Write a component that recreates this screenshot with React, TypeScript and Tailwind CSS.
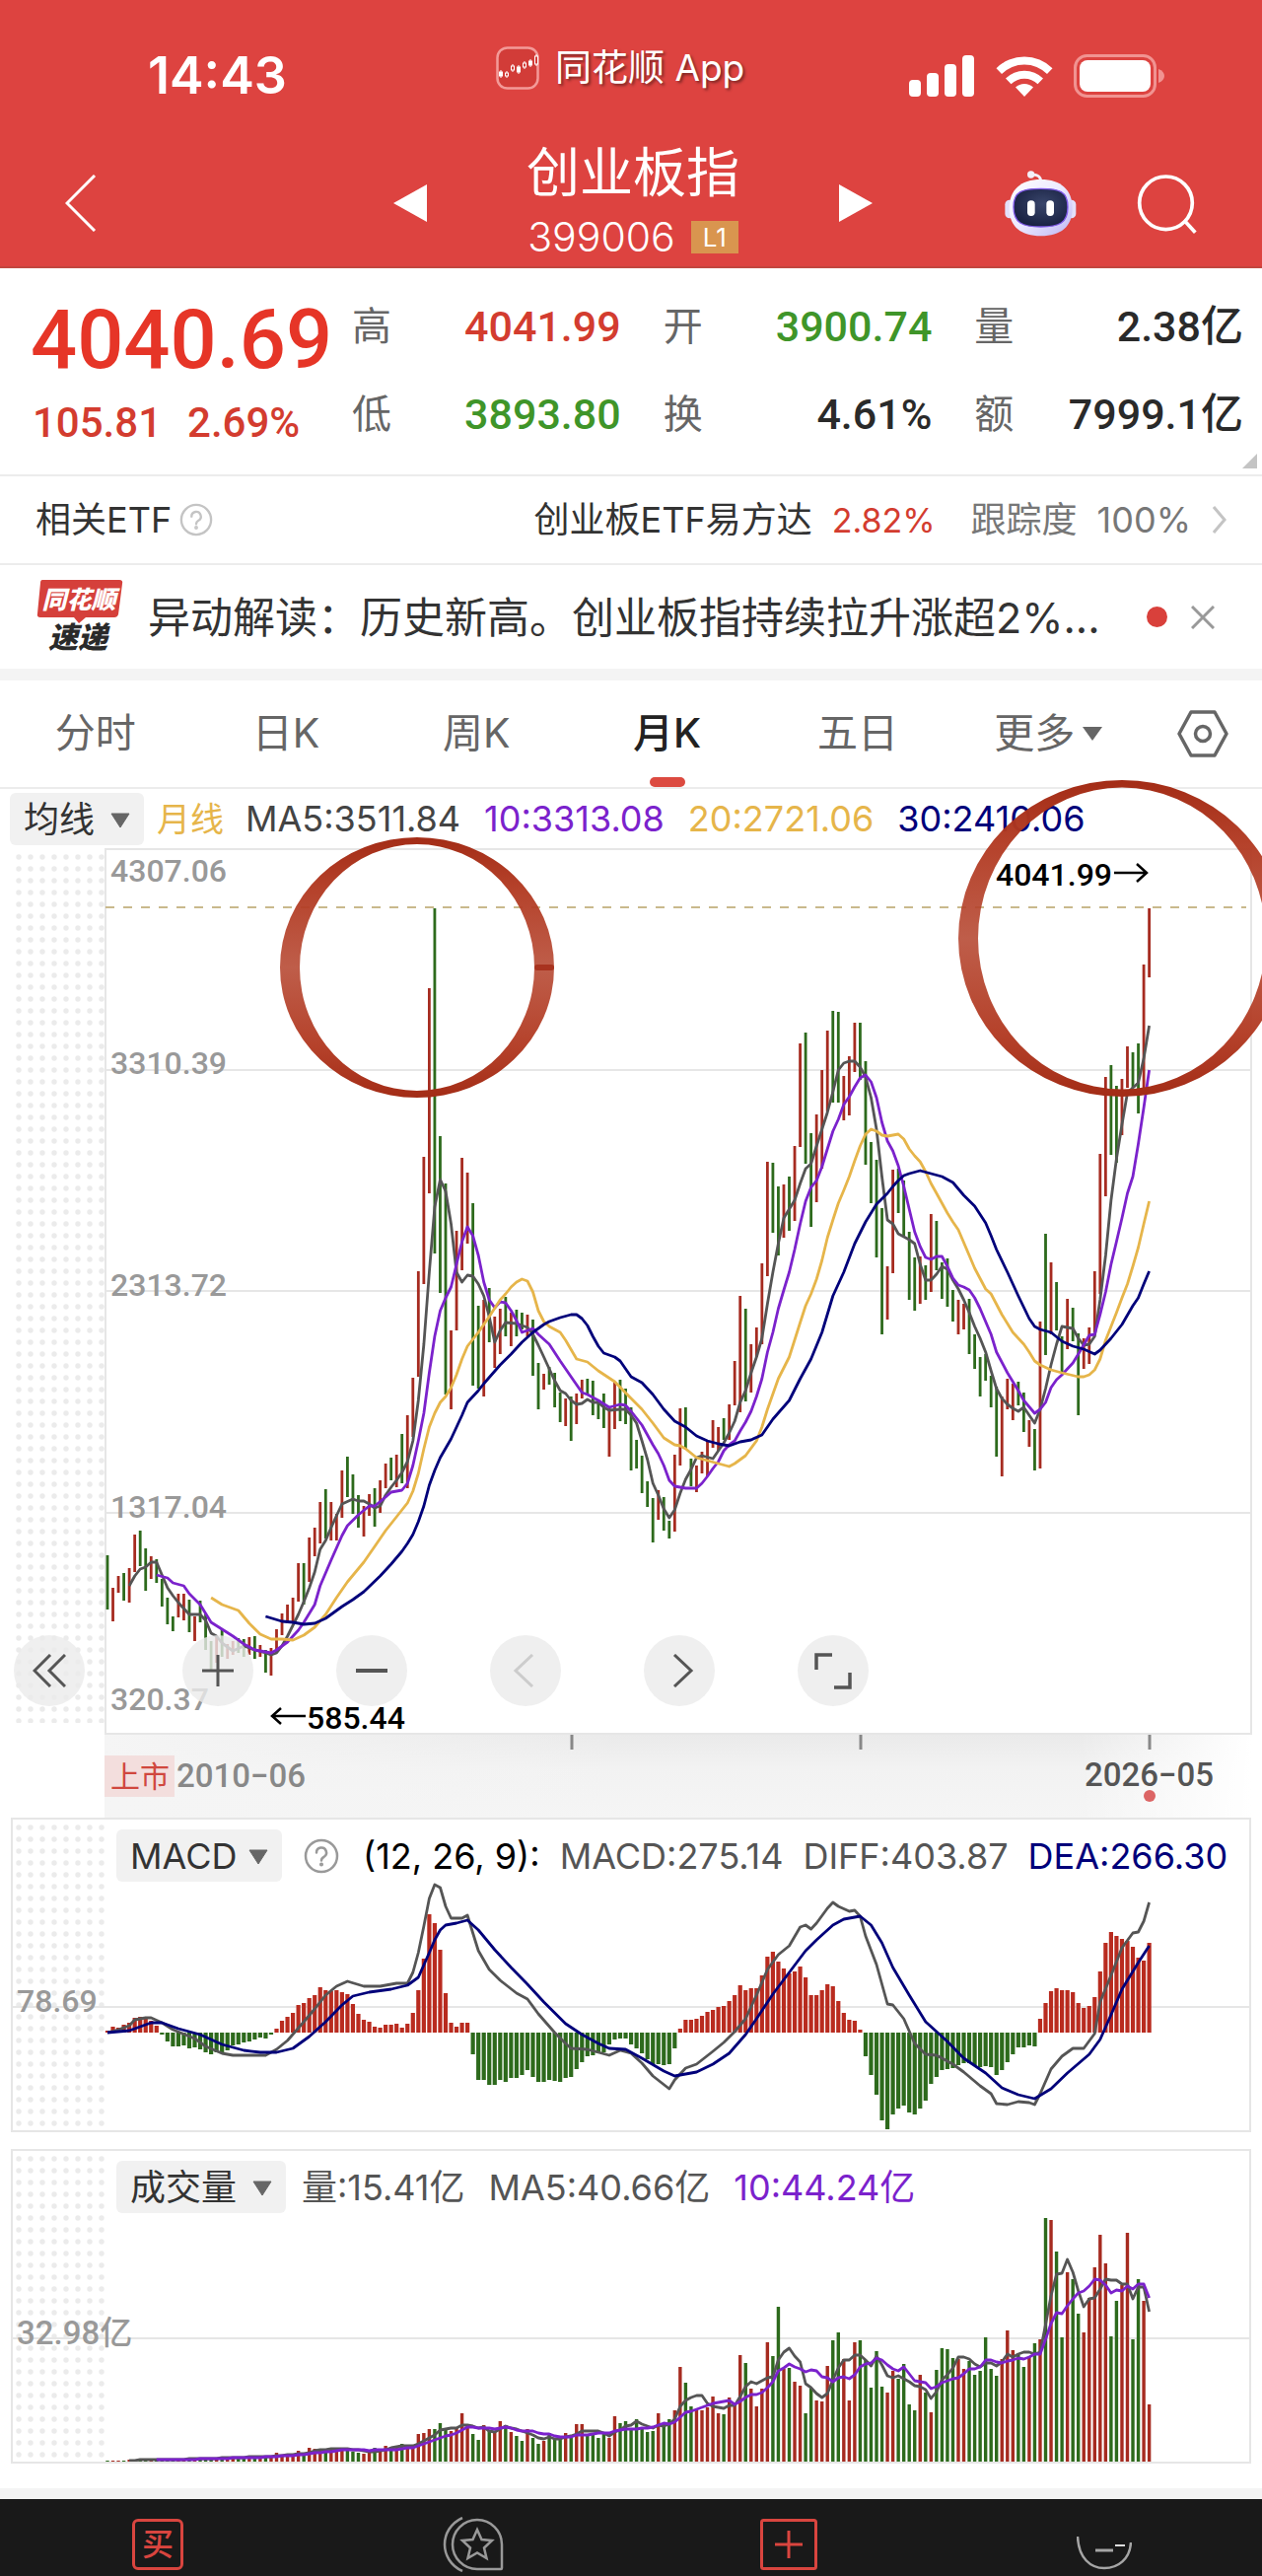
import React, { useState } from 'react';

type Bar = [number, number, number]; // [up, high, low]
type Point = [number, number]; // [month index, y]

const FIRST_X = 109;
const STEP = 5.532;
const RED = '#a62b20';
const GREEN = '#2d6a1c';
const GRAY = '#555555';
const NAVY = '#00007a';
const PURPLE = '#7b22cc';
const AMBER = '#e6b54a';

const xAt = (i: number) => FIRST_X + i * STEP;
const toPoints = (points: Point[]) => points.map(([i, y]) => `${xAt(i).toFixed(1)},${y}`).join(' ');

const candles: Bar[] = [
  [0, 1577, 1632], [1, 1610, 1644], [1, 1598, 1615], [0, 1595, 1623], [1, 1590, 1625], [1, 1556, 1594],
  [0, 1552, 1588], [0, 1570, 1613], [1, 1578, 1601], [0, 1581, 1605], [0, 1601, 1629], [0, 1620, 1647],
  [0, 1639, 1654], [1, 1616, 1640], [1, 1616, 1643], [0, 1622, 1655], [1, 1639, 1664], [0, 1623, 1645],
  [0, 1636, 1673], [0, 1664, 1693], [1, 1658, 1686], [0, 1652, 1680], [1, 1667, 1682], [1, 1664, 1678],
  [0, 1661, 1676], [0, 1662, 1680], [1, 1660, 1678], [0, 1659, 1682], [1, 1668, 1680], [0, 1673, 1696],
  [1, 1671, 1699], [1, 1652, 1676], [1, 1636, 1658], [1, 1627, 1646], [1, 1620, 1646], [1, 1585, 1624],
  [0, 1585, 1627], [1, 1559, 1604], [1, 1549, 1578], [1, 1523, 1565], [0, 1510, 1560], [1, 1523, 1562],
  [1, 1535, 1562], [1, 1491, 1539], [0, 1477, 1518], [0, 1495, 1535], [0, 1516, 1549], [1, 1527, 1558],
  [1, 1515, 1537], [0, 1509, 1548], [1, 1501, 1534], [1, 1484, 1509], [0, 1478, 1501], [1, 1475, 1508],
  [0, 1454, 1504], [1, 1435, 1509], [1, 1397, 1457], [1, 1289, 1396], [1, 1173, 1302], [1, 1002, 1210],
  [0, 921, 1271], [0, 1152, 1311], [0, 1200, 1414], [1, 1349, 1429], [1, 1248, 1349], [1, 1174, 1288],
  [1, 1189, 1261], [0, 1220, 1405], [0, 1324, 1408], [1, 1318, 1416], [0, 1306, 1361], [1, 1335, 1387],
  [1, 1327, 1373], [0, 1315, 1355], [1, 1331, 1365], [0, 1328, 1355], [0, 1331, 1348], [1, 1333, 1355],
  [0, 1338, 1395], [0, 1382, 1429], [1, 1393, 1409], [0, 1386, 1404], [0, 1392, 1427], [0, 1412, 1442],
  [1, 1418, 1446], [0, 1416, 1461], [1, 1413, 1444], [1, 1399, 1418], [0, 1398, 1414], [0, 1400, 1435],
  [0, 1420, 1439], [0, 1413, 1448], [1, 1428, 1477], [1, 1401, 1449], [0, 1399, 1441], [0, 1408, 1444],
  [0, 1427, 1491], [0, 1460, 1489], [0, 1476, 1514], [0, 1502, 1528], [0, 1519, 1564], [1, 1511, 1541],
  [0, 1518, 1552], [0, 1542, 1560], [1, 1475, 1553], [1, 1428, 1486], [0, 1427, 1469], [0, 1479, 1507],
  [1, 1486, 1513], [1, 1472, 1494], [1, 1461, 1497], [1, 1440, 1468], [1, 1447, 1471], [0, 1438, 1460],
  [1, 1424, 1460], [1, 1380, 1425], [1, 1314, 1432], [0, 1327, 1421], [1, 1363, 1412], [1, 1346, 1376],
  [1, 1281, 1363], [1, 1178, 1294], [0, 1179, 1250], [0, 1203, 1273], [1, 1201, 1255], [0, 1193, 1248],
  [1, 1162, 1238], [1, 1058, 1163], [0, 1047, 1180], [0, 1149, 1244], [1, 1130, 1219], [1, 1085, 1185],
  [1, 1045, 1127], [0, 1025, 1118], [0, 1026, 1118], [1, 1091, 1136], [1, 1071, 1131], [1, 1037, 1087],
  [0, 1037, 1095], [0, 1076, 1181], [0, 1158, 1220], [0, 1176, 1275], [0, 1225, 1353], [1, 1284, 1338],
  [1, 1186, 1291], [0, 1185, 1230], [0, 1197, 1253], [0, 1249, 1318], [0, 1275, 1329], [1, 1274, 1322],
  [0, 1283, 1318], [1, 1231, 1310], [0, 1238, 1288], [0, 1280, 1317], [0, 1276, 1325], [0, 1308, 1340],
  [1, 1318, 1353], [1, 1322, 1348], [0, 1317, 1373], [0, 1353, 1388], [0, 1376, 1416], [0, 1373, 1400],
  [0, 1395, 1427], [0, 1406, 1477], [1, 1416, 1497], [1, 1398, 1429], [1, 1403, 1440], [0, 1401, 1425],
  [0, 1412, 1452], [1, 1440, 1467], [0, 1449, 1491], [1, 1340, 1489], [0, 1251, 1374], [1, 1280, 1353],
  [0, 1300, 1349], [0, 1355, 1391], [1, 1317, 1368], [0, 1326, 1360], [0, 1352, 1435], [1, 1357, 1388],
  [1, 1346, 1383], [1, 1289, 1351], [1, 1170, 1312], [1, 1092, 1213], [0, 1080, 1171], [0, 1101, 1179],
  [1, 1094, 1151], [1, 1061, 1103], [0, 1067, 1103], [0, 1058, 1129], [1, 978, 1103], [1, 921, 991],
];

const ma5: Point[] = [
  [4, 1608], [5, 1598], [6, 1591], [7, 1589], [8, 1584], [9, 1584], [10, 1597], [11, 1610], [12, 1618], [13, 1625],
  [14, 1631], [15, 1637], [17, 1637], [18, 1643], [19, 1656], [20, 1659], [21, 1666], [22, 1670], [23, 1674], [25, 1669],
  [27, 1673], [29, 1676], [30, 1678], [31, 1676], [32, 1669], [33, 1659], [34, 1648], [35, 1637], [36, 1624], [37, 1610],
  [38, 1594], [39, 1571], [40, 1562], [41, 1549], [42, 1537], [43, 1525], [45, 1520], [46, 1522], [47, 1522], [48, 1525],
  [49, 1529], [50, 1527], [51, 1516], [52, 1508], [53, 1501], [54, 1493], [55, 1482], [56, 1461], [57, 1420], [58, 1363],
  [59, 1290], [60, 1224], [61, 1196], [62, 1208], [63, 1241], [64, 1290], [65, 1300], [66, 1293], [67, 1294], [68, 1302],
  [69, 1314], [70, 1335], [71, 1361], [72, 1349], [73, 1341], [75, 1342], [77, 1346], [78, 1353], [79, 1364], [80, 1376],
  [81, 1388], [82, 1400], [83, 1410], [84, 1413], [85, 1420], [86, 1424], [87, 1423], [88, 1419], [89, 1422], [90, 1422],
  [91, 1427], [92, 1430], [94, 1429], [95, 1429], [96, 1435], [97, 1443], [98, 1461], [99, 1480], [100, 1504], [101, 1516],
  [102, 1530], [103, 1539], [104, 1531], [105, 1514], [106, 1500], [107, 1490], [108, 1478], [109, 1476], [111, 1479],
  [112, 1471], [113, 1463], [114, 1453], [115, 1441], [116, 1422], [117, 1410], [118, 1392], [119, 1376], [120, 1357],
  [121, 1322], [122, 1290], [123, 1261], [124, 1235], [125, 1226], [126, 1217], [127, 1200], [128, 1185], [129, 1180],
  [130, 1162], [131, 1145], [132, 1128], [133, 1107], [134, 1085], [135, 1078], [136, 1076], [137, 1076], [138, 1082],
  [139, 1092], [140, 1113], [141, 1145], [142, 1193], [143, 1237], [144, 1241], [145, 1251], [146, 1254], [147, 1257],
  [148, 1261], [149, 1282], [150, 1298], [151, 1298], [152, 1292], [153, 1284], [154, 1287], [155, 1298], [156, 1307],
  [157, 1318], [158, 1331], [159, 1345], [160, 1357], [161, 1371], [162, 1390], [163, 1408], [164, 1418], [165, 1424],
  [166, 1428], [167, 1431], [168, 1427], [169, 1435], [170, 1443], [171, 1429], [172, 1408], [173, 1384], [174, 1363],
  [175, 1345], [177, 1347], [178, 1357], [179, 1364], [180, 1363], [181, 1355], [182, 1318], [183, 1273], [184, 1217],
  [185, 1175], [186, 1140], [187, 1108], [188, 1103], [189, 1098], [190, 1073], [191, 1040],
];

const ma10: Point[] = [
  [9, 1597], [11, 1600], [12, 1605], [14, 1608], [15, 1616], [17, 1627], [19, 1645], [21, 1652], [23, 1659], [25, 1667],
  [27, 1673], [30, 1676], [31, 1673], [33, 1665], [35, 1653], [36, 1645], [38, 1627], [39, 1608], [41, 1582], [43, 1557],
  [44, 1547], [46, 1536], [48, 1527], [49, 1527], [51, 1518], [52, 1513], [54, 1511], [55, 1504], [56, 1486], [57, 1461],
  [58, 1433], [59, 1392], [60, 1355], [61, 1329], [62, 1316], [63, 1305], [64, 1282], [65, 1259], [66, 1244], [67, 1253],
  [68, 1273], [69, 1300], [70, 1318], [71, 1326], [72, 1320], [73, 1321], [74, 1329], [75, 1339], [76, 1351], [78, 1347],
  [79, 1353], [81, 1363], [83, 1380], [85, 1396], [87, 1412], [88, 1414], [90, 1420], [92, 1427], [94, 1424], [95, 1425],
  [96, 1431], [98, 1445], [100, 1465], [101, 1474], [102, 1486], [103, 1501], [104, 1507], [106, 1509], [108, 1509],
  [109, 1504], [110, 1497], [111, 1489], [112, 1482], [113, 1471], [114, 1465], [115, 1461], [116, 1451], [117, 1442],
  [118, 1431], [119, 1416], [120, 1398], [121, 1371], [122, 1351], [123, 1327], [124, 1308], [125, 1290], [126, 1267],
  [127, 1241], [128, 1218], [129, 1204], [130, 1197], [131, 1183], [132, 1165], [133, 1147], [134, 1135], [135, 1120],
  [136, 1112], [137, 1102], [138, 1093], [139, 1090], [140, 1097], [141, 1113], [142, 1138], [143, 1157], [144, 1167],
  [145, 1182], [146, 1203], [147, 1226], [148, 1249], [149, 1264], [150, 1275], [151, 1277], [152, 1274], [153, 1274],
  [154, 1284], [155, 1296], [156, 1303], [157, 1305], [158, 1308], [159, 1316], [160, 1327], [162, 1353], [163, 1371],
  [165, 1392], [167, 1410], [168, 1420], [170, 1433], [171, 1429], [172, 1422], [173, 1407], [174, 1399], [175, 1394],
  [177, 1382], [178, 1373], [180, 1354], [181, 1353], [182, 1333], [183, 1310], [184, 1282], [185, 1259], [186, 1235],
  [187, 1210], [188, 1193], [189, 1160], [190, 1123], [191, 1085],
];

const ma20: Point[] = [
  [19, 1620], [21, 1627], [24, 1633], [26, 1646], [28, 1657], [30, 1662], [32, 1662], [34, 1663], [36, 1658], [38, 1650],
  [40, 1637], [42, 1620], [44, 1604], [47, 1584], [49, 1568], [51, 1552], [53, 1538], [55, 1524], [56, 1512], [57, 1494],
  [58, 1469], [59, 1447], [60, 1433], [61, 1422], [62, 1416], [63, 1407], [64, 1394], [65, 1378], [66, 1365], [68, 1351],
  [69, 1343], [70, 1335], [72, 1318], [73, 1312], [74, 1305], [75, 1300], [76, 1297], [77, 1299], [78, 1310], [79, 1329],
  [80, 1340], [81, 1345], [83, 1351], [84, 1359], [86, 1378], [88, 1381], [90, 1390], [93, 1401], [96, 1418], [98, 1429],
  [100, 1443], [102, 1458], [104, 1465], [105, 1466], [106, 1469], [108, 1478], [110, 1481], [112, 1484], [114, 1487],
  [115, 1484], [117, 1476], [119, 1461], [120, 1447], [121, 1429], [123, 1398], [125, 1376], [127, 1341], [128, 1324],
  [129, 1312], [130, 1297], [131, 1278], [132, 1255], [133, 1237], [134, 1220], [135, 1207], [136, 1193], [137, 1177],
  [138, 1162], [139, 1150], [140, 1145], [141, 1147], [142, 1151], [143, 1152], [144, 1151], [145, 1150], [146, 1155],
  [147, 1165], [148, 1172], [149, 1178], [150, 1188], [151, 1200], [152, 1210], [153, 1220], [154, 1230], [155, 1239],
  [156, 1247], [158, 1273], [159, 1286], [161, 1307], [162, 1312], [164, 1333], [166, 1351], [168, 1363], [169, 1371],
  [170, 1380], [171, 1384], [173, 1389], [175, 1392], [178, 1396], [179, 1396], [180, 1394], [181, 1389], [182, 1378],
  [183, 1359], [184, 1345], [185, 1331], [186, 1316], [187, 1302], [188, 1284], [189, 1265], [190, 1241], [191, 1218],
];

const ma30: Point[] = [
  [29, 1639], [32, 1644], [34, 1645], [36, 1647], [38, 1646], [40, 1641], [43, 1629], [45, 1622], [47, 1614], [50, 1598],
  [52, 1586], [54, 1573], [55, 1565], [56, 1556], [57, 1543], [58, 1527], [59, 1506], [60, 1491], [61, 1478], [63, 1459],
  [65, 1435], [66, 1422], [68, 1410], [69, 1403], [72, 1384], [74, 1373], [76, 1361], [78, 1351], [80, 1343], [81, 1340],
  [83, 1336], [85, 1333], [86, 1333], [87, 1337], [88, 1344], [89, 1355], [90, 1365], [91, 1372], [93, 1376], [94, 1380],
  [96, 1396], [98, 1402], [100, 1414], [102, 1429], [104, 1441], [106, 1447], [108, 1456], [110, 1461], [112, 1464],
  [114, 1466], [116, 1462], [118, 1460], [120, 1455], [122, 1439], [125, 1420], [127, 1398], [129, 1378], [131, 1351],
  [133, 1314], [135, 1290], [137, 1261], [139, 1239], [141, 1221], [143, 1210], [144, 1203], [145, 1197], [146, 1192],
  [147, 1190], [149, 1187], [151, 1190], [153, 1193], [155, 1199], [157, 1212], [159, 1223], [161, 1240], [162, 1253],
  [163, 1267], [165, 1290], [167, 1314], [169, 1337], [170, 1345], [171, 1348], [173, 1351], [175, 1360], [177, 1365],
  [179, 1368], [181, 1373], [182, 1369], [184, 1357], [186, 1343], [188, 1324], [189, 1316], [190, 1302], [191, 1289],
];

// histogram heights, positive above the zero line
const macd = [
  2, 6, 5, 8, 10, 15, 16, 14, 12, 7, -2, -9, -14, -14, -13, -16, -15, -17, -20, -22, -20, -20, -18, -13, -12, -10, -9,
  -7, -5, -6, -2, 4, 12, 16, 20, 28, 30, 35, 38, 46, 43, 42, 43, 41, 39, 29, 19, 13, 11, 6, 5, 8, 8, 9, 5, 9, 20, 43,
  75, 120, 111, 84, 40, 10, 6, 10, 10, -22, -48, -48, -53, -53, -48, -50, -46, -46, -43, -38, -45, -50, -50, -48, -49,
  -50, -46, -45, -37, -30, -24, -23, -21, -20, -12, -7, -6, -6, -12, -16, -21, -27, -32, -32, -33, -32, -16, 4, 13, 13,
  14, 17, 21, 23, 26, 27, 32, 38, 48, 43, 45, 45, 58, 77, 82, 72, 65, 60, 62, 67, 56, 38, 38, 43, 49, 47, 32, 20, 13,
  12, 3, -24, -43, -63, -89, -98, -83, -77, -74, -81, -83, -77, -69, -52, -45, -38, -37, -36, -33, -31, -31, -33, -35,
  -34, -35, -43, -38, -30, -22, -15, -15, -13, -14, 14, 30, 42, 45, 43, 43, 41, 30, 25, 27, 36, 62, 91, 102, 98, 95, 93,
  87, 76, 73, 91,
];

const diff: Point[] = [
  [0, 2061], [2, 2058], [4, 2054], [5, 2048], [7, 2046], [8, 2046], [10, 2051], [12, 2058], [16, 2067], [18, 2075],
  [21, 2082], [23, 2084], [29, 2084], [31, 2078], [33, 2069], [36, 2050], [38, 2037], [40, 2023], [42, 2014], [44, 2009],
  [47, 2014], [50, 2014], [53, 2011], [55, 2011], [56, 2000], [57, 1980], [58, 1953], [59, 1925], [60, 1911], [61, 1914],
  [62, 1933], [63, 1945], [65, 1945], [66, 1942], [67, 1960], [68, 1978], [70, 1997], [72, 2008], [75, 2021], [77, 2027],
  [79, 2042], [82, 2061], [84, 2072], [85, 2077], [88, 2078], [92, 2084], [94, 2079], [96, 2082], [98, 2092], [100, 2105],
  [103, 2118], [104, 2109], [106, 2097], [108, 2093], [111, 2080], [113, 2071], [115, 2060], [117, 2047], [119, 2023],
  [121, 1997], [123, 1982], [125, 1973], [127, 1954], [128, 1952], [129, 1956], [130, 1950], [132, 1935], [133, 1929],
  [134, 1933], [136, 1938], [137, 1937], [138, 1943], [139, 1963], [141, 1992], [143, 2032], [144, 2033], [146, 2047],
  [148, 2072], [150, 2083], [152, 2084], [155, 2093], [157, 2101], [160, 2115], [162, 2123], [163, 2133], [165, 2134],
  [167, 2131], [169, 2132], [170, 2134], [171, 2123], [173, 2098], [175, 2085], [177, 2077], [179, 2077], [181, 2062],
  [182, 2030], [184, 2003], [186, 1975], [188, 1960], [189, 1959], [190, 1948], [191, 1929],
];

const dea: Point[] = [
  [0, 2061], [4, 2059], [6, 2055], [8, 2051], [10, 2051], [13, 2057], [17, 2063], [21, 2073], [25, 2079], [28, 2081],
  [31, 2081], [34, 2077], [37, 2065], [40, 2050], [43, 2033], [45, 2024], [48, 2020], [52, 2017], [55, 2013], [57, 2005],
  [59, 1980], [60, 1967], [61, 1957], [62, 1952], [64, 1950], [66, 1947], [68, 1957], [71, 1977], [74, 1995], [77, 2012],
  [80, 2030], [84, 2052], [87, 2063], [90, 2072], [92, 2077], [95, 2078], [98, 2087], [102, 2100], [104, 2105],
  [108, 2101], [111, 2093], [114, 2082], [117, 2063], [119, 2047], [122, 2022], [125, 2000], [128, 1978], [130, 1967],
  [133, 1952], [135, 1946], [138, 1943], [140, 1952], [142, 1970], [144, 1995], [147, 2023], [150, 2050], [154, 2070],
  [157, 2087], [161, 2102], [164, 2117], [167, 2124], [170, 2128], [173, 2118], [176, 2102], [180, 2083], [182, 2068],
  [184, 2043], [186, 2017], [189, 1990], [191, 1973],
];

const volumes = [
  1, 1, 1, 1, 2, 2, 2, 2, 2, 2, 2, 2, 2, 3, 3, 3, 3, 4, 3, 3, 4, 4, 4, 4, 5, 5, 5, 5, 5, 6, 6, 9, 6, 6, 7, 11, 9, 14,
  13, 12, 13, 12, 13, 14, 13, 10, 9, 8, 10, 14, 13, 16, 15, 16, 18, 16, 14, 28, 29, 33, 33, 39, 32, 31, 34, 49, 37, 28,
  22, 37, 32, 31, 41, 37, 30, 26, 21, 33, 24, 18, 21, 29, 24, 24, 29, 26, 38, 38, 26, 29, 24, 28, 24, 46, 39, 41, 34,
  43, 34, 30, 31, 49, 38, 43, 52, 96, 80, 56, 52, 52, 55, 66, 49, 48, 65, 59, 108, 100, 74, 56, 74, 121, 107, 157, 94,
  95, 81, 77, 49, 74, 62, 61, 97, 123, 131, 104, 62, 121, 123, 103, 75, 112, 76, 70, 92, 84, 99, 58, 52, 88, 70, 50, 93,
  115, 114, 105, 104, 94, 102, 88, 92, 126, 94, 87, 104, 133, 113, 108, 96, 106, 120, 124, 247, 245, 213, 126, 192, 185,
  150, 131, 166, 197, 230, 201, 127, 163, 179, 232, 124, 185, 163, 58,
];

const VOLUME_BASE = 2496;
const MACD_ZERO = 2061;

function average(values: number[], span: number): Point[] {
  const out: Point[] = [];
  for (let i = span - 1; i < values.length; i++) {
    const sum = values.slice(i - span + 1, i + 1).reduce((a, b) => a + b, 0);
    out.push([i, VOLUME_BASE - Math.round(sum / span)]);
  }
  return out;
}

const Line: React.FC<{ points: Point[]; color: string }> = ({ points, color }) => (
  <polyline points={toPoints(points)} fill="none" stroke={color} strokeWidth="2.8" strokeLinejoin="round" />
);

const DotGrid: React.FC<{ id: string; y: number; height: number }> = ({ id, y, height }) => (
  <>
    <defs>
      <pattern id={id} x="13" y={y} width="12" height="12" patternUnits="userSpaceOnUse">
        <circle cx="6" cy="6" r="2.7" fill="#ebebeb" />
      </pattern>
    </defs>
    <rect x="14" y={y} width="93" height={height} fill={`url(#${id})`} />
  </>
);

const HelpIcon: React.FC<{ className: string }> = ({ className }) => (
  <svg viewBox="0 0 36 36" className={className} fill="none" stroke="currentColor" strokeWidth="2.5">
    <circle cx="18" cy="18" r="16" />
    <path d="M13 14.5a5 5 0 1 1 7.5 4.3c-1.8 1-2.5 1.8-2.5 3.7" strokeLinecap="round" />
    <circle cx="18" cy="26.5" r="0.8" fill="currentColor" />
  </svg>
);

interface PickerProps {
  label: string;
  options: string[];
  className: string;
}

const Picker: React.FC<PickerProps> = ({ label, options, className }) => (
  <label className={`relative block h-[53px] shrink-0 rounded-md bg-[#f1f1f1] text-[#333] ${className}`}>
    <select aria-label={label} className="h-full w-full appearance-none bg-transparent pl-[14px] text-[36px] leading-[53px] outline-none">
      {options.map(option => (
        <option key={option}>{option}</option>
      ))}
    </select>
    <svg viewBox="0 0 20 16" className="pointer-events-none absolute right-[14px] top-5 h-4 w-5">
      <path d="M1 1h18L10 15z" fill="#666" stroke="#666" strokeLinejoin="round" />
    </svg>
  </label>
);

const StatusBar = () => (
  <div className="grid grid-cols-[353px_1fr_260px] items-center pl-[150px] pr-[98px] pt-[40px]">
    <span className="pt-2 text-[52px] font-semibold leading-[58px]">14:43</span>
    <div className="flex items-center gap-[16px] pb-[8px]">
      <svg viewBox="0 0 44 44" className="h-[44px] w-[44px]">
        <rect x="1.5" y="1.5" width="41" height="41" rx="10" fill="#d23c38" stroke="#f39a98" strokeWidth="2.5" />
        <g stroke="#fff" strokeWidth="1">
          <path d="M5 24v8M11 25v7M17 18v8M23 19v9M29 15v8M35 13v8M41 8v12" />
          <g fill="#fff">
            <rect x="3.500" y="26" width="3" height="4" />
            <rect x="21.500" y="21" width="3" height="5" />
            <rect x="33.500" y="15" width="3" height="4" />
          </g>
          <g fill="#d23c38">
            <rect x="9.500" y="27" width="3" height="3" />
            <rect x="15.500" y="20" width="3" height="4" />
            <rect x="27.500" y="17" width="3" height="4" />
            <rect x="39.500" y="10" width="3" height="8" />
          </g>
        </g>
      </svg>
      <span className="text-[37px] leading-[44px] [text-shadow:2px_2px_3px_rgba(0,0,0,0.45)]">同花顺 App</span>
    </div>
    <div className="flex items-center justify-between pt-2">
      <svg viewBox="0 0 66 42" className="h-[42px] w-[66px]" fill="#fff">
        <rect x="0" y="25" width="12" height="17" rx="4" />
        <rect x="18" y="18" width="12" height="24" rx="4" />
        <rect x="36" y="9" width="12" height="33" rx="4" />
        <rect x="54" y="0" width="12" height="42" rx="4" />
      </svg>
      <svg viewBox="0 0 58 42" className="h-[42px] w-[58px]" fill="#fff">
        <path d="M29 42l9-9.500a13 13 0 0 0-18 0z" />
        <path d="M10 23.500a27 27 0 0 1 38 0l-5.500 5.800a19 19 0 0 0-27 0z" />
        <path d="M0.500 13.200a40.500 40.500 0 0 1 57 0l-5.500 5.800a32.500 32.500 0 0 0-46 0z" />
      </svg>
      <svg viewBox="0 0 93 44" className="h-[44px] w-[93px]">
        <rect x="1.500" y="1.500" width="81" height="41" rx="12" fill="none" stroke="#f19391" strokeWidth="3" />
        <rect x="6" y="6" width="72" height="32" rx="8" fill="#fff" />
        <path d="M86 15c8 3 8 11 0 14z" fill="#f19391" />
      </svg>
    </div>
  </div>
);

const RobotIcon = () => (
  <svg viewBox="55 55 225 210" className="h-[70px] w-[75px]">
    <defs>
      <linearGradient id="shell" x1="0" y1="0" x2="1" y2="1">
        <stop offset="0" stopColor="#fff" />
        <stop offset="0.5" stopColor="#ece9ff" />
        <stop offset="1" stopColor="#bcb4f4" />
      </linearGradient>
      <radialGradient id="visor" cx="0.55" cy="0.4" r="0.7">
        <stop offset="0" stopColor="#39456b" />
        <stop offset="1" stopColor="#141c3c" />
      </radialGradient>
    </defs>
    <path d="M168 95c0-16-8-22-30-22" fill="none" stroke="#f3eff8" strokeWidth="9" strokeLinecap="round" />
    <circle cx="138" cy="73" r="11" fill="#f3eff8" />
    <rect x="59" y="150" width="30" height="56" rx="14" fill="#e3dffa" />
    <rect x="245" y="150" width="30" height="56" rx="14" fill="#e3dffa" />
    <path d="M168 88c62 0 96 32 96 88s-36 84-96 84-96-28-96-84 34-88 96-88z" fill="url(#shell)" />
    <path d="M168 116c56 0 82 8 82 56s-26 60-82 60-83-12-83-60 27-56 83-56z" fill="url(#visor)" stroke="#7f58e8" strokeWidth="4" />
    <rect x="127" y="152" width="23" height="47" rx="11" fill="#fff" />
    <rect x="185" y="152" width="23" height="47" rx="11" fill="#fff" />
  </svg>
);

const Header = () => (
  <header className="border-b-2 border-[#c2463f] bg-[#dd4340] text-white">
    <StatusBar />
    <div className="mt-[36px] grid grid-cols-[1fr_auto_1fr] items-center pl-[4px]">
      <button type="button" aria-label="返回" className="justify-self-start pl-[62px]">
        <svg viewBox="0 0 32 58" className="h-[58px] w-[32px]" fill="none" stroke="#fff" strokeWidth="3">
          <path d="M30 1L2 29l28 28" />
        </svg>
      </button>
      <div className="flex w-[486px] items-center justify-between">
        <button type="button" aria-label="上一个">
          <svg viewBox="0 0 34 38" className="h-[38px] w-[34px]" fill="#fff"><path d="M34 0v38L0 19z" /></svg>
        </button>
        <div className="flex flex-col items-center">
          <h1 className="text-[54px] font-normal leading-[68px]">创业板指</h1>
          <div className="flex items-center gap-[16px]">
            <span className="text-[41px] font-light leading-[60px]">399006</span>
            <span className="w-[48px] bg-[#d9954f] text-center text-[26px] leading-[33px]">L1</span>
          </div>
        </div>
        <button type="button" aria-label="下一个">
          <svg viewBox="0 0 34 38" className="h-[38px] w-[34px]" fill="#fff"><path d="M0 0v38l34-19z" /></svg>
        </button>
      </div>
      <div className="flex items-center gap-[60px] justify-self-end pr-[66px]">
        <button type="button" aria-label="智能助手"><RobotIcon /></button>
        <button type="button" aria-label="搜索">
          <svg viewBox="460 72 182 182" className="h-[61px] w-[61px]" fill="none" stroke="#fff" strokeWidth="11">
            <circle cx="548" cy="161" r="80" />
            <path d="M603 213l34 37" />
          </svg>
        </button>
      </div>
    </div>
  </header>
);

const quotes = [
  { label: '高', value: '4041.99', tone: 'text-[#d33c2f]' },
  { label: '开', value: '3900.74', tone: 'text-[#3f9529]' },
  { label: '量', value: '2.38亿', tone: 'text-[#2a2a2a]' },
  { label: '低', value: '3893.80', tone: 'text-[#3f9529]' },
  { label: '换', value: '4.61%', tone: 'text-[#2a2a2a]' },
  { label: '额', value: '7999.1亿', tone: 'text-[#2a2a2a]' },
];

const QuotePanel = () => (
  <section className="relative flex border-b-2 border-[#ececec] pb-[17px] pl-[31px] pr-[19px] pt-[14px]">
    <div className="w-[326px] pt-[14px] font-[Roboto,'Noto_Sans_CJK_SC',sans-serif]">
      <div className="text-[83px] font-medium leading-[90px] text-[#e63527]">4040.69</div>
      <div className="flex gap-[26px] pl-[2px] pt-[10px] text-[42px] font-medium leading-[58px] text-[#d33c2f]">
        <span>105.81</span>
        <span>2.69%</span>
      </div>
    </div>
    <dl className="grid flex-1 grid-cols-3 gap-x-[43px]">
      {quotes.map(({ label, value, tone }) => (
        <div key={label} className="flex h-[89px] items-center justify-between">
          <dt className="text-[40px] leading-[60px] text-[#666]">{label}</dt>
          <dd className={`whitespace-nowrap font-[Roboto,'Noto_Sans_CJK_SC',sans-serif] text-[43px] font-medium leading-[60px] ${tone}`}>{value}</dd>
        </div>
      ))}
    </dl>
    <svg viewBox="0 0 15 15" className="absolute bottom-[6px] right-[5px] h-[15px] w-[15px]"><path d="M15 0v15H0z" fill="#c4c4c4" /></svg>
  </section>
);

const EtfRow = () => (
  <section className="flex h-[90px] items-center justify-between border-b-2 border-[#ececec] pl-[36px] pr-[36px] text-[36px] text-[#333]">
    <div className="flex items-center gap-[8px]">
      相关ETF
      <HelpIcon className="h-[34px] w-[34px] text-[#c4c4c4]" />
    </div>
    <a href="#etf" className="flex items-center">
      <span>创业板ETF易方达</span>
      <span className="pl-[20px] text-[34px] text-[#d33c2f]">2.82%</span>
      <span className="pl-[36px] text-[#777]">跟踪度</span>
      <span className="pl-[20px] text-[#777]">100%</span>
      <svg viewBox="0 0 14 28" className="ml-[22px] h-[28px] w-[14px]" fill="none" stroke="#c4c4c4" strokeWidth="3"><path d="M1 1l11 13L1 27" /></svg>
    </a>
  </section>
);

const NewsRow = () => (
  <section className="flex h-[105px] items-center pl-[36px] pr-[48px]">
    <svg viewBox="0 0 90 78" className="h-[78px] w-[90px] shrink-0 font-['Noto_Sans_CJK_SC',sans-serif] font-black italic" textAnchor="middle">
      <path d="M7 1h78q4 0 3 4l-4 31q-1 3-4 3H51l-7 6-5-6H5q-4 0-3-4l3-31q0-3 2-3z" fill="#d5403b" />
      <text x="44" y="30" fontSize="25" fill="#fff">同花顺</text>
      <text x="43" y="70" fontSize="30" fill="#2a2a2a">速递</text>
    </svg>
    <a href="#news" className="ml-[24px] min-w-0 flex-1 whitespace-nowrap text-[43px] leading-[60px] text-[#333]">异动解读：历史新高。创业板指持续拉升涨超2%...</a>
    <span className="h-[21px] w-[21px] shrink-0 rounded-full bg-[#d9403b]" />
    <button type="button" aria-label="关闭" className="ml-[24px]">
      <svg viewBox="0 0 24 24" className="h-[24px] w-[24px]" stroke="#999" strokeWidth="3"><path d="M1 1l22 22M23 1L1 23" /></svg>
    </button>
  </section>
);

const periods = ['分时', '日K', '周K', '月K', '五日'];

const PeriodTabs = () => {
  const [active, setActive] = useState('月K');

  return (
    <nav className="flex h-[110px] items-stretch border-b-2 border-[#ececec] text-[41px] text-[#666]">
      {periods.map(period => (
        <button
          key={period}
          type="button"
          onClick={() => setActive(period)}
          className={period === active ? 'relative flex-1 font-medium text-[#222]' : 'relative flex-1'}
        >
          {period}
          {period === active && <span className="absolute bottom-0 left-1/2 h-[10px] w-[36px] -translate-x-1/2 rounded-full bg-[#dc4a40]" />}
        </button>
      ))}
      <button type="button" className="flex flex-1 items-center justify-center gap-[8px]">
        更多
        <svg viewBox="0 0 20 14" className="h-[14px] w-[20px]" fill="#666"><path d="M0 0h20L10 14z" /></svg>
      </button>
      <button type="button" aria-label="设置" className="flex w-[120px] items-center justify-center">
        <svg viewBox="0 0 52 48" className="h-[48px] w-[52px]" fill="none" stroke="#666" strokeWidth="3.5" strokeLinejoin="round">
          <path d="M14 2h24l12 22-12 22H14L2 24z" />
          <circle cx="26" cy="24" r="7.500" />
        </svg>
      </button>
    </nav>
  );
};

const PriceChart = () => (
  <svg viewBox="0 860 1280 983" className="block w-full font-[Roboto,'Noto_Sans_CJK_SC',sans-serif] font-medium">
    <defs>
      <linearGradient id="axis" x1="0" y1="0" x2="0" y2="1">
        <stop offset="0" stopColor="#eaeaea" />
        <stop offset="0.4" stopColor="#f2f2f2" />
        <stop offset="1" stopColor="#f5f5f5" />
      </linearGradient>
      <linearGradient id="axis-fade">
        <stop offset="0" stopColor="#f5f5f5" />
        <stop offset="0.45" stopColor="#f5f5f5" stopOpacity="0" />
        <stop offset="0.85" stopColor="#fff" stopOpacity="0" />
        <stop offset="1" stopColor="#fff" />
      </linearGradient>
    </defs>
    <DotGrid id="dots-price" y={863} height={884} />
    <rect x="106" y="1759" width="1163" height="84" fill="url(#axis)" />
    <rect x="106" y="1759" width="1163" height="84" fill="url(#axis-fade)" />
    <g stroke="#e6e6e6" strokeWidth="2" fill="none">
      <rect x="107" y="861" width="1162" height="897" />
      <path d="M107 1085H1269M107 1309H1269M107 1534H1269" />
    </g>
    <path d="M107 920H1264" stroke="#c9b98c" strokeWidth="2" strokeDasharray="9 9" />
    <g fontSize="32" fill="#999">
      <text x="112" y="894">4307.06</text>
      <text x="112" y="1089">3310.39</text>
      <text x="112" y="1314">2313.72</text>
      <text x="112" y="1539">1317.04</text>
      <text x="112" y="1734">320.37</text>
    </g>
    {candles.map(([up, high, low], i) => (
      <rect key={i} x={xAt(i) - 1.4} y={high} width="2.8" height={low - high} fill={up ? RED : GREEN} />
    ))}
    <Line points={ma5} color={GRAY} />
    <Line points={ma10} color={PURPLE} />
    <Line points={ma20} color={AMBER} />
    <Line points={ma30} color={NAVY} />
    <g fontSize="32" fill="#000">
      <text x="1128" y="898" textAnchor="end">4041.99</text>
      <text x="311" y="1753">585.44</text>
    </g>
    <path d="M1130 885h33m-10-9l10 9-10 9M310 1740h-34m9-8l-9 8 9 8" stroke="#000" strokeWidth="2.500" fill="none" />
    <path d="M580 1759v15M873 1759v15M1166 1759v15" stroke="#888" strokeWidth="3" />
    <rect x="106" y="1780" width="71" height="42" fill="#f3dedd" />
    <text x="112" y="1812" fontSize="30" fontWeight="400" fill="#d0473e">上市</text>
    <text x="179" y="1812" fontSize="33" fill="#888">2010−06</text>
    <text x="1231" y="1811" fontSize="33" textAnchor="end" fill="#555">2026−05</text>
    <circle cx="1166" cy="1821" r="6" fill="#dc6565" />
  </svg>
);

const roundButton = 'flex h-[72px] w-[72px] items-center justify-center rounded-full bg-[#ebebeb]/80';

const ChartControls = () => (
  <div className="absolute bottom-[113px] left-[14px] flex gap-[99px] text-[#555]">
    <button type="button" aria-label="收起" className={roundButton}>
      <svg viewBox="0 0 34 34" className="h-[34px] w-[34px]" fill="none" stroke="currentColor" strokeWidth="3"><path d="M18 1L2 17l16 16M33 1L17 17l16 16" /></svg>
    </button>
    <div className="flex gap-[84px]">
      <button type="button" aria-label="放大" className={roundButton}>
        <svg viewBox="0 0 34 34" className="h-[34px] w-[34px]" stroke="currentColor" strokeWidth="3"><path d="M17 1v32M1 17h32" /></svg>
      </button>
      <button type="button" aria-label="缩小" className={roundButton}>
        <svg viewBox="0 0 34 34" className="h-[34px] w-[34px]" stroke="currentColor" strokeWidth="4"><path d="M1 17h32" /></svg>
      </button>
      <button type="button" aria-label="向左" className={`${roundButton} text-[#ccc]`}>
        <svg viewBox="0 0 34 34" className="h-[34px] w-[34px]" fill="none" stroke="currentColor" strokeWidth="3"><path d="M24 1L7 17l17 16" /></svg>
      </button>
      <button type="button" aria-label="向右" className={roundButton}>
        <svg viewBox="0 0 34 34" className="h-[34px] w-[34px]" fill="none" stroke="currentColor" strokeWidth="3"><path d="M12 1l17 16-17 16" /></svg>
      </button>
      <button type="button" aria-label="全屏" className={roundButton}>
        <svg viewBox="0 0 38 38" className="h-[38px] w-[38px]" fill="none" stroke="currentColor" strokeWidth="3.5"><path d="M2 18V3h16M36 21v15H20" /></svg>
      </button>
    </div>
  </div>
);

// brush rings over the two historic peaks
const PeakRings = () => (
  <svg viewBox="0 800 1280 330" className="pointer-events-none absolute left-0 top-0 w-full overflow-visible">
    <defs>
      <linearGradient id="brush" x1="0" y1="0" x2="0" y2="1">
        <stop offset="0" stopColor="#a32c16" />
        <stop offset="0.2" stopColor="#b23a22" stopOpacity="0.96" />
        <stop offset="0.5" stopColor="#b4432c" stopOpacity="0.86" />
        <stop offset="0.8" stopColor="#b23a22" stopOpacity="0.96" />
        <stop offset="1" stopColor="#a32c16" />
      </linearGradient>
    </defs>
    <g fill="url(#brush)" fillRule="evenodd">
      <path d="M284 981a139 132 0 0 1 278 0a139 132 0 0 1-278 0zM304 981a119 125 0 0 0 238 0a119 125 0 0 0-238 0z" />
      <path d="M972 951.500a166 160.500 0 0 1 332 0a166 160.500 0 0 1-332 0zM992 951.500a146 153 0 0 0 292 0a146 153 0 0 0-292 0z" />
    </g>
    <rect x="542" y="978" width="20" height="6" rx="3" fill="#a8331f" />
  </svg>
);

const MacdPanel = () => (
  <section className="mx-[11px] grid border-2 border-[#e6e6e6]">
    <svg viewBox="13 1845 1254 315" className="block w-full [grid-area:1/1]">
      <DotGrid id="dots-macd" y={1847} height={312} />
      <path d="M13 2035H1267" stroke="#e6e6e6" strokeWidth="2" />
      {macd.map((value, i) => (
        <rect key={i} x={xAt(i) - 2.1} y={value > 0 ? MACD_ZERO - value : MACD_ZERO} width="4.200" height={Math.abs(value)} fill={value > 0 ? '#b92b1f' : GREEN} />
      ))}
      <Line points={diff} color={GRAY} />
      <Line points={dea} color={NAVY} />
      <text x="17" y="2040" fontSize="32" fill="#999" className="font-[Roboto,sans-serif] font-medium">78.69</text>
    </svg>
    <div className="mt-[10px] flex h-[53px] items-center whitespace-nowrap pl-[105px] text-[36px] [grid-area:1/1]">
      <Picker label="副图指标" options={['MACD', 'KDJ', 'RSI']} className="w-[168px]" />
      <HelpIcon className="ml-[22px] h-[36px] w-[36px] text-[#999]" />
      <span className="pl-[24px] text-black">(12, 26, 9):</span>
      <span className="pl-[20px] text-[#555]">MACD:275.14</span>
      <span className="pl-[20px] text-[#555]">DIFF:403.87</span>
      <span className="pl-[20px] text-[#00007a]">DEA:266.30</span>
    </div>
  </section>
);

const VolumePanel = () => (
  <section className="mx-[11px] mt-[17px] grid border-2 border-[#e6e6e6]">
    <svg viewBox="13 2181 1254 315" className="block w-full [grid-area:1/1]">
      <DotGrid id="dots-volume" y={2183} height={312} />
      <path d="M13 2371H1267" stroke="#e6e6e6" strokeWidth="2" />
      {volumes.map((value, i) => (
        <rect key={i} x={xAt(i) - 1.7} y={VOLUME_BASE - value} width="3.400" height={value} fill={candles[i][0] ? RED : GREEN} />
      ))}
      <Line points={average(volumes, 5)} color={GRAY} />
      <Line points={average(volumes, 10)} color={PURPLE} />
      <text x="17" y="2377" fontSize="33" fill="#999" className="font-[Roboto,'Noto_Sans_CJK_SC',sans-serif] font-medium">32.98亿</text>
    </svg>
    <div className="mt-[10px] flex h-[53px] items-center whitespace-nowrap pl-[105px] text-[36px] [grid-area:1/1]">
      <Picker label="成交量指标" options={['成交量', '成交额']} className="w-[172px]" />
      <span className="pl-[16px] text-[#555]">量:15.41亿</span>
      <span className="pl-[24px] text-[#555]">MA5:40.66亿</span>
      <span className="pl-[24px] text-[#7b22cc]">10:44.24亿</span>
    </div>
  </section>
);

const BottomNav = () => (
  <nav className="grid h-[78px] grid-cols-4 items-center justify-items-center bg-[#191919] pt-[14px]">
    <button type="button" className="flex h-[52px] w-[52px] items-center justify-center rounded-md border-3 border-[#d9453f] text-[32px] font-medium leading-[46px] text-[#d9453f]">
      买
    </button>
    <button type="button" aria-label="自选">
      <svg viewBox="0 0 62 56" className="h-[56px] w-[62px]" fill="none" stroke="#999" strokeWidth="2.500">
        <path d="M20 1C-4 12-4 44 20 55" />
        <path d="M60 52V28a25 25 0 1 0-25 25h24q1 0 1-1z" />
        <path d="M35 13l4.500 10 10.500 1-8 7.500 2.500 10.500-9.500-5.500-9.500 5.500 2.500-10.500-8-7.500 10.500-1z" />
      </svg>
    </button>
    <button type="button" aria-label="添加">
      <svg viewBox="0 0 58 52" className="h-[52px] w-[58px]" fill="none" stroke="#d9453f" strokeWidth="3">
        <rect x="1.500" y="1.500" width="55" height="49" rx="2" />
        <path d="M29 12v28M15 26h28" />
      </svg>
    </button>
    <button type="button" aria-label="更多">
      <svg viewBox="0 0 56 52" className="h-[52px] w-[56px]" fill="none" stroke="#a5a5a5" strokeWidth="2.500">
        <path d="M1 18C2 40 14 50 28 50s26-9 27-26" />
        <path d="M19 32h18" strokeWidth="3" />
        <path d="M39 27h10" stroke="#ddd" strokeWidth="2" />
      </svg>
    </button>
  </nav>
);

const App: React.FC = () => {
  return (
    <div className="w-full overflow-hidden bg-white font-[Inter,'Noto_Sans_CJK_SC',sans-serif]">
      <Header />
      <main>
        <QuotePanel />
        <EtfRow />
        <NewsRow />
        <div className="h-[12px] bg-[#f4f4f4]" />
        <PeriodTabs />
        <section className="relative">
          <div className="flex h-[60px] items-center whitespace-nowrap pl-[10px] text-[36px]">
            <Picker label="主图指标" options={['均线', 'BOLL']} className="w-[136px]" />
            <span className="pl-[13px] text-[34px] text-[#e6b54a]">月线</span>
            <span className="pl-[22px] text-[#444]">MA5:3511.84</span>
            <span className="pl-[24px] text-[#7b22cc]">10:3313.08</span>
            <span className="pl-[24px] text-[#e6b54a]">20:2721.06</span>
            <span className="pl-[24px] text-[#00007a]">30:2410.06</span>
          </div>
          <PriceChart />
          <ChartControls />
          <PeakRings />
        </section>
        <MacdPanel />
        <VolumePanel />
      </main>
      <div className="mt-[25px] h-[11px] bg-[#f4f4f4]" />
      <BottomNav />
    </div>
  );
};

export default App;
